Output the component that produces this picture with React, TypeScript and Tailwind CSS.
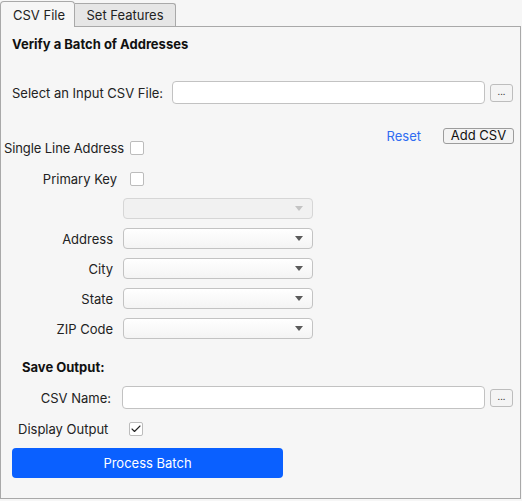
import { Check } from "lucide-react";

const font = { fontFamily: 'Inter, "Liberation Sans", Arial, sans-serif' };

function Caret({ disabled }: { disabled?: boolean }) {
  return (
    <svg width="8" height="5" viewBox="0 0 8 5" className="shrink-0">
      <path d="M0 0 L8 0 L4 5 Z" fill={disabled ? "#c4c4c4" : "#5a5a5a"} />
    </svg>
  );
}

function Select({ disabled }: { disabled?: boolean }) {
  return (
    <div
      className={
        disabled
          ? "w-[190px] h-[21px] rounded-[4px] border border-[#d6d6d6] bg-[#f1f1f1] flex items-center justify-end pr-[9px]"
          : "w-[190px] h-[21px] rounded-[4px] border border-[#c3c3c3] bg-gradient-to-b from-white to-[#f4f4f4] flex items-center justify-end pr-[9px]"
      }
    >
      <Caret disabled={disabled} />
    </div>
  );
}

function Dots() {
  return (
    <div className="w-[23px] h-[18px] rounded-[3px] border border-[#bdbdbd] bg-[#f4f4f4] flex items-center justify-center text-[9px] leading-none text-[#444] pb-[2px]">
      ...
    </div>
  );
}

function CheckBox({ checked }: { checked?: boolean }) {
  return (
    <div className="w-[14px] h-[14px] rounded-[2px] border border-[#bcbcbc] bg-white flex items-center justify-center">
      {checked && <Check size={12} strokeWidth={2.2} className="text-[#222]" />}
    </div>
  );
}

function FieldRow({ label, disabled }: { label?: string; disabled?: boolean }) {
  return (
    <div className="flex items-center h-[21px]">
      <div className="w-[112px] pt-[2px] text-right text-[13px] text-[#222]">{label}</div>
      <div className="ml-[10px]">
        <Select disabled={disabled} />
      </div>
    </div>
  );
}

export default function App() {
  return (
    <div className="w-[522px] h-[501px] bg-[#f6f6f6] select-none" style={font}>
      <div className="flex items-end h-[27px]">
        <div className="relative z-10 w-[75px] h-[26px] border border-b-0 border-[#a9a9a9] rounded-t-[4px] bg-[#f6f6f6] flex items-center pl-[12px] pt-[2px] text-[13px] text-[#222]">
          CSV File
        </div>
        <div className="w-[101px] h-[23px] border border-l-0 border-b-0 border-[#a9a9a9] rounded-tr-[3px] bg-[#e6e6e6] flex items-center justify-center pt-[2px] text-[13px] text-[#222] mb-[1px]">
          Set Features
        </div>
      </div>
      <div className="-mt-[1px] w-[521px] h-[473px] border border-[#a9a9a9] flex flex-col">
        <div className="mt-[10px] ml-[11px] h-[16px] flex items-center text-[13px] font-bold text-[#111]">
          Verify a Batch of Addresses
        </div>

        <div className="mt-[28px] flex items-center h-[23px]">
          <div className="ml-[11px] w-[160px] pt-[2px] text-[13px] text-[#222]">Select an Input CSV File:</div>
          <div className="w-[313px] h-[23px] rounded-[4px] border border-[#c2c2c2] bg-white" />
          <div className="ml-[5px]">
            <Dots />
          </div>
        </div>

        <div className="mt-[24px] flex items-center justify-end h-[16px] pr-[6px]">
          <span className="text-[13px] text-[#2f6cf2] mr-[22px] pt-[1px]">Reset</span>
          <div className="w-[71px] h-[16px] rounded-[3px] border border-[#9c9c9c] bg-[#f3f3f3] flex items-center justify-center text-[13px] text-[#111]">
            Add CSV
          </div>
        </div>

        <div className="-mt-[3px] flex items-center h-[14px]">
          <div className="ml-[3px] w-[126px] pt-[2px] text-[13px] tracking-[-0.1px] text-[#222]">Single Line Address</div>
          <CheckBox />
        </div>

        <div className="mt-[17px] flex items-center h-[14px]">
          <div className="w-[116px] pt-[2px] text-right text-[13px] text-[#222]">Primary Key</div>
          <div className="ml-[13px]">
            <CheckBox />
          </div>
        </div>

        <div className="mt-[12px] flex flex-col gap-[9px]">
          <FieldRow disabled />
          <FieldRow label="Address" />
          <FieldRow label="City" />
          <FieldRow label="State" />
          <FieldRow label="ZIP Code" />
        </div>

        <div className="mt-[21px] ml-[21px] h-[16px] flex items-center text-[13px] font-bold text-[#111]">
          Save Output:
        </div>

        <div className="mt-[10px] flex items-center h-[23px]">
          <div className="w-[110px] pt-[2px] text-right text-[13px] text-[#222]">CSV Name:</div>
          <div className="ml-[11px] w-[363px] h-[23px] rounded-[4px] border border-[#c2c2c2] bg-white" />
          <div className="ml-[5px]">
            <Dots />
          </div>
        </div>

        <div className="mt-[13px] flex items-center h-[14px]">
          <div className="ml-[17px] w-[111px] pt-[2px] text-[13px] text-[#222]">Display Output</div>
          <CheckBox checked />
        </div>

        <div className="mt-[12px] ml-[11px] w-[271px] h-[30px] pt-[2px] rounded-[4px] bg-[#0a60ff] flex items-center justify-center text-[13px] text-white">
          Process Batch
        </div>
      </div>
    </div>
  );
}
